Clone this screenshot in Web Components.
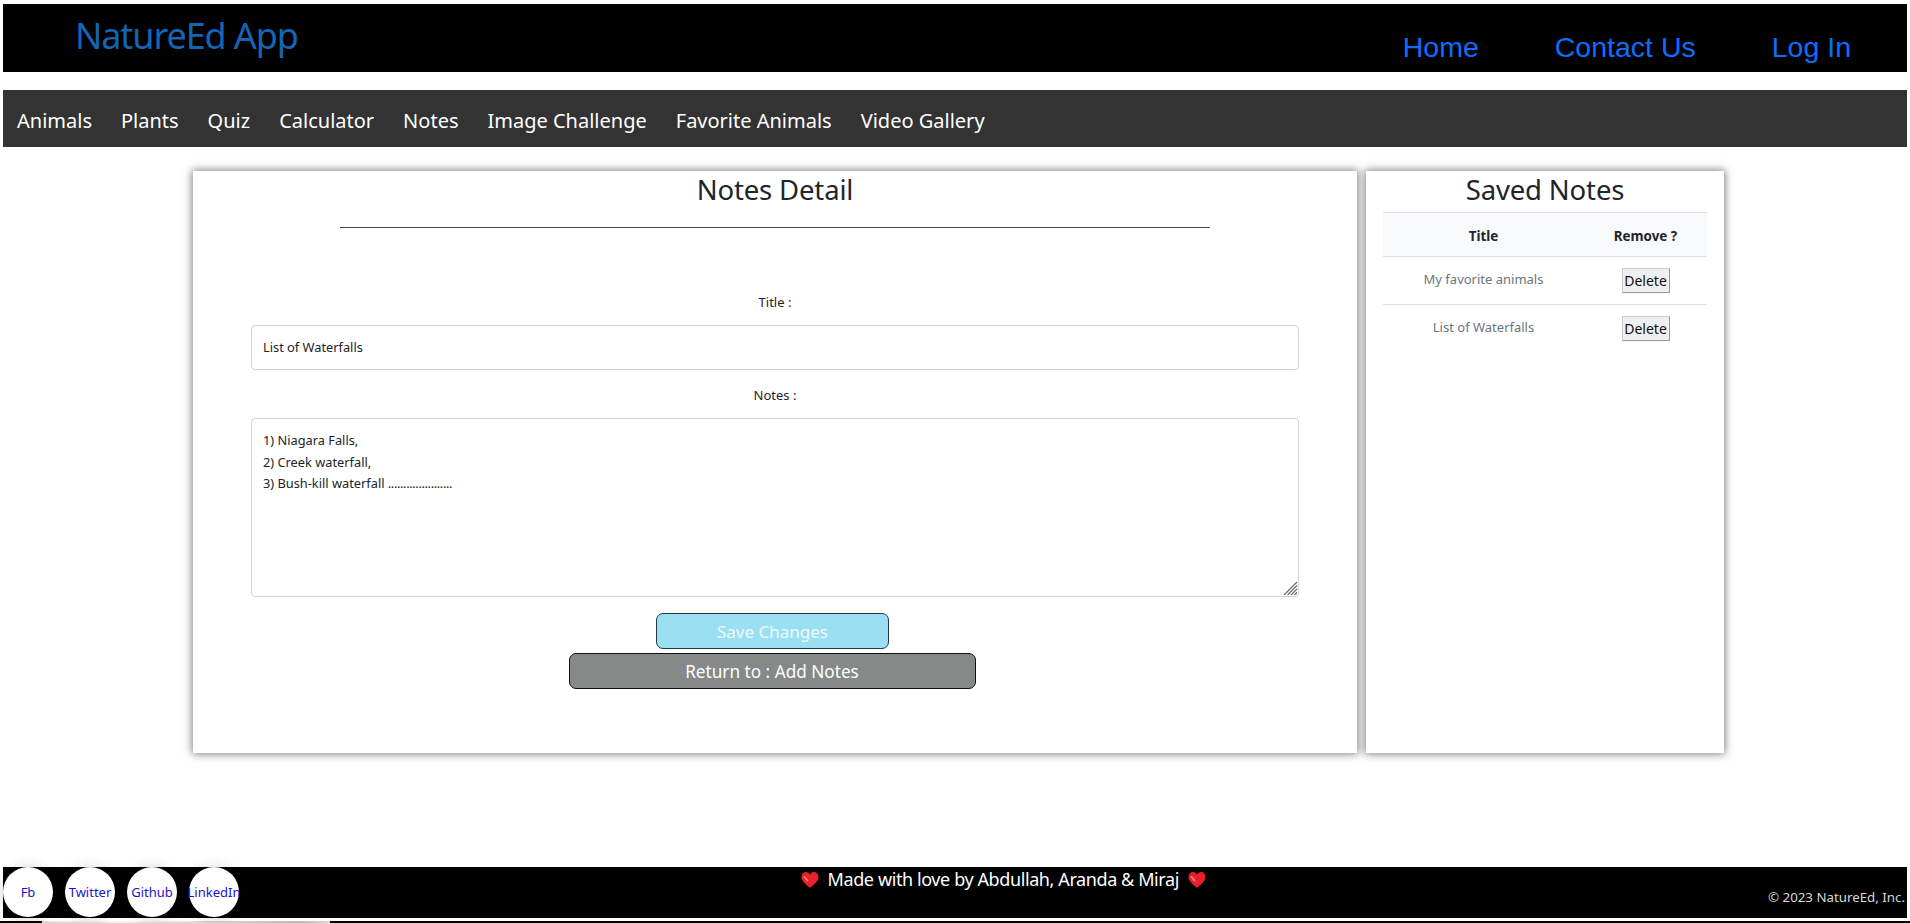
<!DOCTYPE html>
<html><head><meta charset="utf-8"><style>
html,body{margin:0;padding:0;background:#fff;height:923px;overflow:hidden}
body{font-family:"Noto Sans","Open Sans",sans-serif;color:#212529;display:flex;flex-direction:column;padding:4px 3px 0 3px;box-sizing:border-box}
</style></head><body>
<top-bar></top-bar>
<side-nav></side-nav>
<main-row></main-row>
<page-footer></page-footer>
<bottom-line></bottom-line>
<script>
function def(name,html){customElements.define(name,class extends HTMLElement{constructor(){super();this.attachShadow({mode:'open'}).innerHTML=html}})}
const heart=`<svg width="18" height="16" viewBox="0 0 18 16"><path d="M9 16C6 13 .5 9.500 .5 5 .5 2 2.500 0 5 0c1.800 0 3.200 1 4 2.500C9.800 1 11.200 0 13 0c2.500 0 4.500 2 4.500 5 0 4.500-5.500 8-8.500 11z" fill="#e8202a"/><path d="M3 4.500 7 9" stroke="#f58a8a" stroke-width="1.600" fill="none"/></svg>`;
def('top-bar',`<style>:host{display:flex;height:68px;background:#000;justify-content:space-between;flex:none}
.b{font-size:36px;line-height:48px;color:#1565b5;margin:8px 0 0 72px;letter-spacing:-1.1px;font-weight:400}
.l{display:flex;font:28.5px/34px "Liberation Sans",sans-serif;gap:76px;padding:26px 56px 0 0;color:#0d6efd}
</style><div class="b">NatureEd App</div><div class="l"><span>Home</span><span>Contact Us</span><span>Log In</span></div>`);
def('side-nav',`<style>:host{display:flex;height:57px;margin-top:18px;background:#333;color:#fff;font-size:20px;align-items:center;padding:3px 0 0 14px;box-sizing:border-box;gap:29px;flex:none}</style>
<span>Animals</span><span>Plants</span><span>Quiz</span><span>Calculator</span><span>Notes</span><span>Image Challenge</span><span>Favorite Animals</span><span>Video Gallery</span>`);
def('main-row',`<style>:host{display:flex;gap:9px;margin:24px 0 0 190px;height:582px;flex:none}
</style><notes-detail></notes-detail><saved-notes></saved-notes>`);
def('notes-detail',`<style>:host{display:flex;flex-direction:column;align-items:center;width:1164px;height:582px;background:#fff;box-shadow:0 0 8px 1px rgba(0,0,0,.5);box-sizing:border-box;font-size:13px}
h2{font-weight:400;font-size:27.500px;line-height:36px;margin:1px 0 0;color:#212529;letter-spacing:-.15px}
hr{width:870px;height:1px;border:0;background:#444;margin:19px 0 0}
label{display:block;margin-top:65px;line-height:18px}
.f{width:1048px;box-sizing:border-box;border:1px solid #ced4da;border-radius:4px;padding:0 11px;line-height:21.600px;color:#212529;background:#fff;font-size:12.800px}
.i{height:45px;margin-top:14px;display:flex;align-items:center}
.t{height:179px;margin-top:14px;padding-top:11px;position:relative}
i{font-style:normal;letter-spacing:-.37px}
svg{position:absolute;right:0;bottom:0}
.s,.r{box-sizing:border-box;border:1.500px solid #111;border-radius:7px;color:#fff;height:36px;display:flex;align-items:center;justify-content:center}
.s{width:233px;background:#9ae0f2;margin:16px 0 0 -5px;font-size:17px;border-color:#1c3b46;color:#eefafd}
.r{width:407px;background:#858988;margin-top:4px;margin-left:-6px;font-size:17.200px}
</style><h2>Notes Detail</h2><hr><label>Title :</label><div class="f i">List of Waterfalls</div><label style="margin-top:16px">Notes :</label>
<div class="f t"><div>1) Niagara Falls,</div><div>2) Creek waterfall,</div><div>3) Bush-kill waterfall <i>.....................</i></div><svg width="16" height="16" viewBox="0 0 16 16"><path d="M15 2 2 15M15 5.500 5.500 15M15 9 9 15M15 12.500 12.500 15" stroke="#666" stroke-width="1.100" fill="none"/></svg></div>
<div class="s">Save Changes</div><div class="r">Return to : Add Notes</div>`);
def('saved-notes',`<style>:host{display:block;width:358px;height:582px;background:#fff;box-shadow:0 0 8px 1px rgba(0,0,0,.5);box-sizing:border-box;padding:0 17px;font-size:13px}
h2{font-weight:400;font-size:27.500px;line-height:36px;margin:1px 0 0;text-align:center;color:#212529;letter-spacing:-.15px}
.g{display:grid;grid-template-columns:201px 123px;margin-top:4px;text-align:center}
.h{background:#f8f9fa;font-weight:700;font-size:13.400px;height:45px;display:flex;align-items:center;justify-content:center;padding-top:2px;border-top:1px solid #dee2e6;border-bottom:1px solid #dee2e6;box-sizing:border-box;color:#212529}
.c{height:48px;border-bottom:1px solid #dee2e6;box-sizing:border-box;display:flex;justify-content:center;padding-top:13px;color:#6c757d;line-height:18px}
.d{padding-top:11px}
b{font-weight:400;font-size:14px;display:block;width:48px;height:25px;box-sizing:border-box;background:#efefef;border:1px solid #999;border-top-color:#ccc;border-left-color:#ccc;color:#111;line-height:24px;text-align:center}
.x{border-bottom:0}
</style><h2>Saved Notes</h2><div class="g"><div class="h">Title</div><div class="h">Remove ?</div>
<div class="c">My favorite animals</div><div class="c d"><b>Delete</b></div>
<div class="c x">List of Waterfalls</div><div class="c d x"><b>Delete</b></div></div>`);
def('page-footer',`<style>:host{display:flex;height:51px;margin-top:114px;background:#000;color:#fff;position:relative;flex:none}
.s{display:flex;gap:12px;position:relative;z-index:1}
.s span{width:50px;height:50px;border-radius:50%;background:#fff;color:#1a12c8;font-size:13px;display:flex;align-items:center;justify-content:center;white-space:nowrap;box-shadow:0 1px 14px rgba(0,0,0,.2)}
.m{position:absolute;left:798px;top:0;font-size:18px;line-height:24px;white-space:nowrap;letter-spacing:-.4px}
.m svg{vertical-align:-2px}
.c{position:absolute;right:2px;top:21px;font-size:13.300px;line-height:18px;color:#d8d8d8;white-space:nowrap}
</style><div class="s"><span>Fb</span><span>Twitter</span><span>Github</span><span>LinkedIn</span></div>
<div class="m">${heart} &nbsp;Made with love by Abdullah, Aranda &amp; Miraj &nbsp;${heart}</div>
<div class="c">© 2023 NatureEd, Inc.</div>`);
def('bottom-line',`<style>:host{display:block;height:2px;margin:3px -3px 0;flex:none;background:linear-gradient(90deg,#000 42px,#ddd 42px,#f5f5f5 120px,#bbb 300px,#ddd 330px,#000 330px)}</style>`);
</script>
</body></html>
